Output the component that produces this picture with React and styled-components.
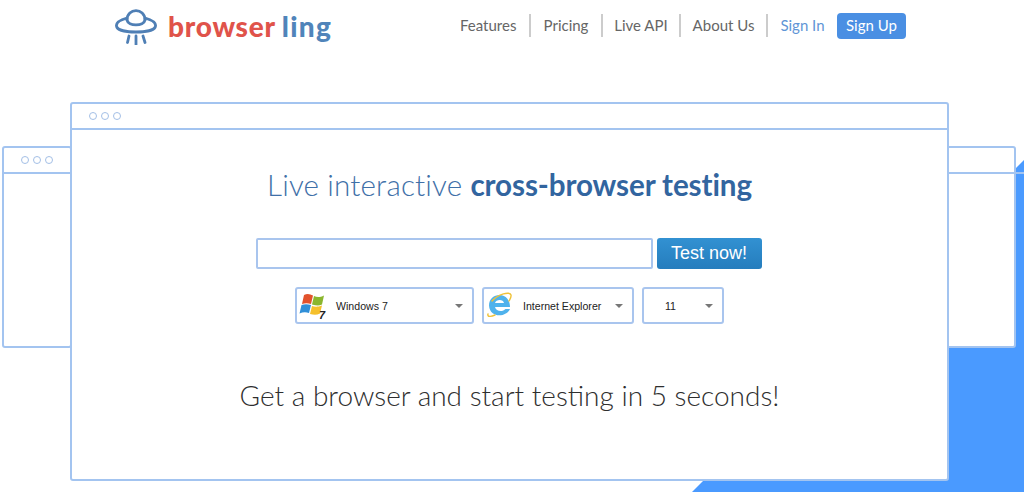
import React from "react";
import styled, { createGlobalStyle } from "styled-components";

const Global = createGlobalStyle`
  html, body { margin: 0; padding: 0; background: #fff; }
  body { font-family: "Lato", "Liberation Sans", sans-serif; }
`;

const Page = styled.div`
  position: relative;
  width: 1024px;
  height: 492px;
  overflow: hidden;
  background: #fff;
`;
const BlueShape = styled.div`
  position: absolute;
  inset: 0;
  background: #4a9aff;
  clip-path: polygon(1024px 160px, 1024px 492px, 692px 492px);
`;
const Header = styled.header`
  position: relative;
  height: 52px;
  display: flex;
  align-items: center;
  padding-left: 115px;
`;
const Logo = styled.div`
  display: flex;
  align-items: center;
  gap: 11px;
  width: 345px;
  flex: none;
`;
const Wordmark = styled.div`
  font-family: "Lato", sans-serif;
  font-weight: 900;
  font-size: 28px;
  letter-spacing: 0.75px;
  line-height: 1;
  color: #e0534a;
  margin-top: -1px;
  span { color: #5084ba; margin-left: 6px; letter-spacing: 1.3px; }
`;
const Nav = styled.nav`
  display: flex;
  align-items: center;
  font-size: 15px;
  color: #666;
  margin-top: -1px;
`;
const NavItem = styled.a`
  width: ${p => p.$w}px;
  text-align: ${p => p.$first ? "left" : "center"};
  height: 23px;
  line-height: 23px;
  color: ${p => p.$accent ? "#5f95d6" : "#666"};
  border-right: ${p => p.$sep ? "2px solid #ccc" : "none"};
  white-space: nowrap;
  box-sizing: border-box;
`;
const SignUp = styled.a`
  width: 69px;
  height: 26px;
  line-height: 25px;
  margin: 1px 0 0 0;
  text-align: center;
  border-radius: 4px;
  background: #4a8fe3;
  color: #fff;
`;
const Browser = styled.section`
  position: ${p => p.$side ? "absolute" : "relative"};
  left: ${p => p.$left ?? "auto"};
  top: ${p => p.$top ?? "auto"};
  margin: ${p => p.$side ? "0" : "50px 0 0 70px"};
  width: ${p => p.$w}px;
  height: ${p => p.$h}px;
  box-sizing: border-box;
  border: 2px solid #a3c4f0;
  border-radius: 3px;
  background: #fff;
`;
const TitleBar = styled.div`
  height: 26px;
  box-sizing: border-box;
  border-bottom: 2px solid #a3c4f0;
  display: flex;
  align-items: center;
  gap: 4px;
  padding: 0 0 0 ${p => p.$pad}px;
`;
const Dot = styled.i`
  width: 8px;
  height: 8px;
  box-sizing: border-box;
  border: 1px solid #a3bfe6;
  border-radius: 50%;
`;
const Content = styled.div`
  display: flex;
  flex-direction: column;
  align-items: center;
`;
const Heading = styled.h1`
  margin: 38px 0 0;
  font-size: 29.6px;
  line-height: 34px;
  font-weight: 300;
  letter-spacing: 0.15px;
  color: #3f70a8;
  white-space: nowrap;
  b { font-weight: 700; color: #32659f; letter-spacing: -0.1px; }
`;
const SearchRow = styled.div`
  display: flex;
  gap: 4px;
  margin: 36px 2px 0 0;
`;
const UrlInput = styled.input`
  width: 397px;
  height: 31px;
  box-sizing: border-box;
  border: 2px solid #a9c5ee;
  border-radius: 2px;
  background: #fff;
  outline: none;
`;
const TestButton = styled.button`
  width: 105px;
  height: 31px;
  border: 0;
  border-radius: 3px;
  padding: 0;
  background: linear-gradient(#3291d2, #257dbd);
  color: #fff;
  font-family: "Liberation Sans", sans-serif;
  font-size: 18px;
`;
const SelectRow = styled.div`
  display: flex;
  gap: 8px;
  margin-top: 18px;
`;
const Select = styled.div`
  position: relative;
  width: ${p => p.$w}px;
  height: 37px;
  box-sizing: border-box;
  border: 2px solid #a9c5ee;
  border-radius: 3px;
  background: #fff;
  display: flex;
  align-items: center;
  padding-left: ${p => p.$pad}px;
  font-family: "Liberation Sans", sans-serif;
  font-size: 10.6px;
  color: #222;
`;
const Label = styled.span`
  margin-left: ${p => p.$gap}px;
  white-space: nowrap;
`;
const Caret = styled.i`
  position: absolute;
  right: 9px;
  top: 15px;
  width: 0;
  height: 0;
  border-left: 4px solid transparent;
  border-right: 4px solid transparent;
  border-top: 4px solid #777;
`;
const Tagline = styled.p`
  margin: 54px 0 0;
  font-size: 28px;
  line-height: 34px;
  font-weight: 300;
  color: #2e2e2e;
  white-space: nowrap;
`;

const Ufo = () => (
  <svg width="42" height="38" viewBox="0 0 42 38" fill="none" stroke="#4f7fb5" strokeWidth="2.8" strokeLinecap="round">
    <path d="M12 13C12 0.500 30 0.500 30 13" />
    <path d="M12 11C5 13 1 16 1.500 19C2 23.500 12 25 21 25C30 25 40 23.500 40.500 19C41 16 37 13 30 11" />
    <path d="M12 13C13 19.500 29 19.500 30 13" />
    <path d="M14 29L12.500 35.500M21 29V37.500M28 29L30 35.500" />
  </svg>
);
const WinLogo = () => (
  <svg width="27" height="27" viewBox="0 0 27 27">
    <path d="M5 3C8 1.500 11 2 14 3.500L12 12C9 11 6 11 3 12Z" fill="#e2522c" />
    <path d="M15 4C18 5.500 21 5.500 25 3.500L23 12.500C20 14 17 13.500 13 12.500Z" fill="#8ab62e" />
    <path d="M2.500 13C5.500 12 8.500 12 12 13L10 21C7 20 4 20 0.500 21.500Z" fill="#2f8fd8" />
    <path d="M13 14C16 15 19 15 23 13.500L21 21.500C18 23 15 23 11 22Z" fill="#f5c02c" />
    <text x="20" y="26.500" fontFamily="Liberation Sans" fontWeight="700" fontStyle="italic" fontSize="11" fill="#222">7</text>
  </svg>
);
const IeLogo = () => (
  <svg width="27" height="27" viewBox="0 0 27 27" fill="none">
    <path d="M3 13.500C3 7 8 3 13.500 3C20 3 24 8 24 15H9C10 20 17 20 19.500 17H24C21 25 4 27 3 13.500ZM9 11H18C17.500 7 10 7 9 11Z" fill="#4fb2ec" fillRule="evenodd" />
    <path d="M2 22C1 25 5 25 9 23M6 9C12 2 24 -1 25 3C25.500 5 24 7 23 9" stroke="#efc23a" strokeWidth="1.4" strokeLinecap="round" />
  </svg>
);

const SideWindow = ({ left, pad }) => (
  <Browser $side $left={left} $top="146px" $w={70} $h={202}>
    <TitleBar $pad={pad}>
      <Dot /><Dot /><Dot />
    </TitleBar>
  </Browser>
);

export default function App() {
  return (
    <Page>
      <Global />
      <BlueShape />
      <SideWindow left="2px" pad={17} />
      <SideWindow left="946px" pad={90} />
      <Header>
        <Logo>
          <Ufo />
          <Wordmark>browser<span>ling</span></Wordmark>
        </Logo>
        <Nav>
          <NavItem $first $sep $w={71}>Features</NavItem>
          <NavItem $sep $w={72}>Pricing</NavItem>
          <NavItem $sep $w={78}>Live API</NavItem>
          <NavItem $sep $w={87}>About Us</NavItem>
          <NavItem $accent $w={69}>Sign In</NavItem>
          <SignUp>Sign Up</SignUp>
        </Nav>
      </Header>
      <Browser $w={879} $h={379}>
        <TitleBar $pad={17}>
          <Dot /><Dot /><Dot />
        </TitleBar>
        <Content>
          <Heading>Live interactive <b>cross-browser testing</b></Heading>
          <SearchRow>
            <UrlInput aria-label="URL" />
            <TestButton>Test now!</TestButton>
          </SearchRow>
          <SelectRow>
            <Select $w={179} $pad={2}><WinLogo /><Label $gap={10}>Windows 7</Label><Caret /></Select>
            <Select $w={152} $pad={2}><IeLogo /><Label $gap={10}>Internet Explorer</Label><Caret /></Select>
            <Select $w={82} $pad={21}><Label $gap={0}>11</Label><Caret /></Select>
          </SelectRow>
          <Tagline>Get a browser and start testing in 5 seconds!</Tagline>
        </Content>
      </Browser>
    </Page>
  );
}
